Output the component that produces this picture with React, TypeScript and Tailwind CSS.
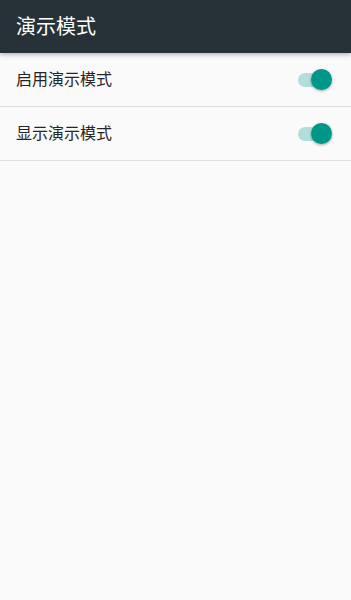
import React from "react";

function Toggle() {
  return (
    <div className="relative w-[34px] h-[20px] flex items-center">
      <div className="w-[32px] h-[14px] rounded-full bg-[#b2dfdb]" />
      <div className="absolute right-0 top-[-1px] w-[21px] h-[21px] rounded-full bg-[#009688] shadow-[0_1px_3px_rgba(0,0,0,0.35)]" />
    </div>
  );
}

function Row({ label }: { label: string }) {
  return (
    <div className="h-[54px] flex items-center justify-between pl-4 pr-[19px] border-b border-[#e0e0e0]">
      <span className="text-[16px] text-[#262626]">{label}</span>
      <Toggle />
    </div>
  );
}

export default function App() {
  return (
    <div
      className="w-[351px] h-[600px] bg-[#fafafa] flex flex-col"
      style={{ fontFamily: 'Roboto, "Noto Sans CJK SC", sans-serif' }}
    >
      <div className="h-[53px] shrink-0 bg-[#263238] flex items-center px-4 shadow-[0_2px_4px_rgba(0,0,0,0.25)] z-10">
        <span className="text-[20px] text-white">演示模式</span>
      </div>
      <Row label="启用演示模式" />
      <Row label="显示演示模式" />
    </div>
  );
}
